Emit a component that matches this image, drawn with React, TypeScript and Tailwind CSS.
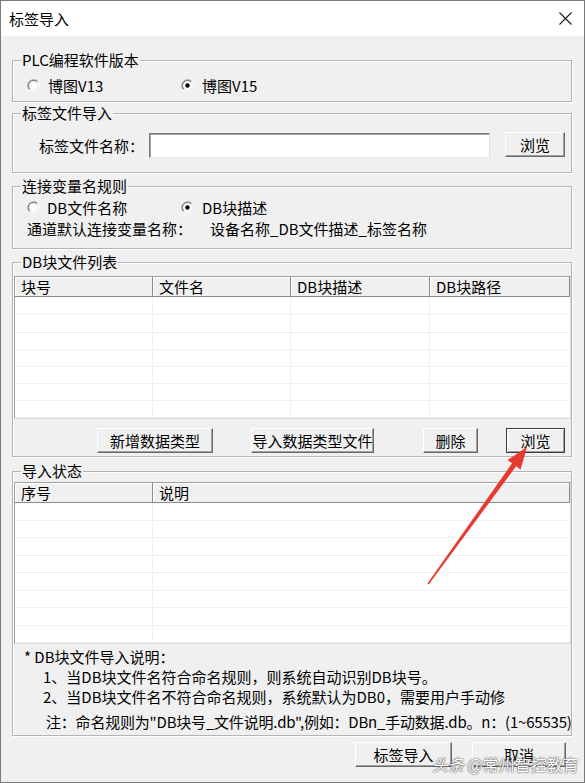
import React from "react";

function Radio({ checked }: { checked?: boolean }) {
  return (
    <svg width="13" height="13" viewBox="0 0 13 13" className="shrink-0">
      <circle cx="6.5" cy="6.5" r="6" fill="#ffffff" />
      <path d="M2.26 10.74A6 6 0 0 1 10.74 2.26" stroke="#a0a0a0" strokeWidth="1" fill="none" />
      <path d="M10.74 2.26A6 6 0 0 1 2.26 10.74" stroke="#ffffff" strokeWidth="1" fill="none" />
      <path d="M2.96 10.04A5 5 0 0 1 10.04 2.96" stroke="#696969" strokeWidth="1" fill="none" />
      <path d="M10.04 2.96A5 5 0 0 1 2.96 10.04" stroke="#e3e3e3" strokeWidth="1" fill="none" />
      {checked && <circle cx="6.5" cy="6.5" r="2.2" fill="#000000" />}
    </svg>
  );
}

function Group({
  title,
  className,
  children,
}: {
  title: string;
  className: string;
  children?: React.ReactNode;
}) {
  return (
    <div
      className={
        "relative w-[560px] border border-[#b4b4b4] shadow-[inset_1px_1px_0_#ffffff,1px_1px_0_#ffffff] " +
        className
      }
    >
      <span className="absolute -top-[10px] left-[8px] bg-[#f0f0f0] px-[1px] text-[15px] leading-[18px] whitespace-nowrap">
        {title}
      </span>
      {children}
    </div>
  );
}

function Btn({
  label,
  className,
  dark,
}: {
  label: string;
  className: string;
  dark?: boolean;
}) {
  return (
    <div
      className={
        "flex h-[25px] shrink-0 items-center justify-center bg-[#f0f0f0] text-[15px] leading-none " +
        (dark
          ? "border border-[#3c3c3c] shadow-[inset_1px_1px_0_#ffffff,inset_-1px_-1px_0_#a0a0a0] "
          : "border border-t-[#ffffff] border-l-[#ffffff] border-r-[#696969] border-b-[#696969] shadow-[inset_-1px_-1px_0_#a0a0a0] ") +
        className
      }
    >
      {label}
    </div>
  );
}

function ListView({
  cols,
  rows,
}: {
  cols: { label: string; w: number }[];
  rows: number[];
}) {
  return (
    <div className="ml-[1px] w-[557px] border border-t-[#a0a0a0] border-l-[#a0a0a0] border-r-[#dcdcdc] border-b-[#dcdcdc] bg-white">
      <div className="flex h-[20px]">
        {cols.map((c, i) => (
          <div
            key={i}
            style={{ width: c.w }}
            className="flex h-full shrink-0 items-center border-r border-b border-r-[#8a8a8a] border-b-[#8a8a8a] bg-[#f0f0f0] pl-[6px] text-[15px] leading-none shadow-[inset_1px_1px_0_#ffffff]"
          >
            {c.label}
          </div>
        ))}
      </div>
      {rows.map((h, r) => (
        <div key={r} style={{ height: h }} className="flex border-b border-[#f0f0f0]">
          {cols.map((c, i) => (
            <div
              key={i}
              style={{ width: c.w }}
              className={"h-full shrink-0 " + (i < cols.length - 1 ? "border-r border-[#f0f0f0]" : "")}
            />
          ))}
        </div>
      ))}
    </div>
  );
}

export default function App() {
  return (
    <div className="relative h-[783px] w-[585px] overflow-hidden border border-[#7a7a7a] bg-[#f0f0f0] font-['Noto_Sans_CJK_SC','Noto_Sans',sans-serif] text-black">
      {/* Title bar */}
      <div className="flex h-[35px] items-center justify-between bg-white pl-[8px] pr-[12px]">
        <span className="text-[15px] leading-none">标签导入</span>
        <svg width="13" height="13" viewBox="0 0 13 13">
          <path d="M0.5 0.5L12.5 12.5M12.5 0.5L0.5 12.5" stroke="#1a1a1a" strokeWidth="1.1" />
        </svg>
      </div>

      <div className="flex flex-col pl-[11px]">
        {/* Group 1 */}
        <Group title="PLC编程软件版本" className="mt-[24px] h-[42px]">
          <div className="flex h-[20px] items-center pl-[14px] mt-[14px] text-[15px] leading-none">
            <div className="flex w-[154px] items-center gap-[8px]">
              <Radio />
              <span>博图V13</span>
            </div>
            <div className="flex items-center gap-[8px]">
              <Radio checked />
              <span>博图V15</span>
            </div>
          </div>
        </Group>

        {/* Group 2 */}
        <Group title="标签文件导入" className="mt-[11px] h-[60px]">
          <div className="mt-[18px] flex items-start pl-[26px] text-[15px] leading-none">
            <div className="flex h-[26px] w-[110px] items-center">标签文件名称：</div>
            <div className="mt-[1px] h-[25px] w-[341px] border border-t-[#7a7a7a] border-l-[#7a7a7a] border-r-[#e3e3e3] border-b-[#e3e3e3] bg-white shadow-[inset_1px_1px_0_#a0a0a0]" />
            <Btn label="浏览" className="ml-[15px] w-[60px]" />
          </div>
        </Group>

        {/* Group 3 */}
        <Group title="连接变量名规则" className="mt-[13px] h-[63px]">
          <div className="mt-[10px] flex h-[20px] items-center pl-[14px] text-[15px] leading-none">
            <div className="flex w-[154px] items-center gap-[7px]">
              <Radio />
              <span>DB文件名称</span>
            </div>
            <div className="flex items-center gap-[8px]">
              <Radio checked />
              <span>DB块描述</span>
            </div>
          </div>
          <div className="flex h-[22px] items-center pl-[14px] text-[15px] leading-none">
            <span className="w-[183px]">通道默认连接变量名称：</span>
            <span>设备名称_DB文件描述_标签名称</span>
          </div>
        </Group>

        {/* Group 4 */}
        <Group title="DB块文件列表" className="mt-[13px] h-[195px]">
          <div className="pt-[13px]">
            <ListView
              cols={[
                { label: "块号", w: 138 },
                { label: "文件名", w: 138 },
                { label: "DB块描述", w: 139 },
                { label: "DB块路径", w: 140 },
              ]}
              rows={[18, 18, 17, 17, 17, 17, 17]}
            />
            <div className="mt-[9px] flex">
              <Btn label="新增数据类型" className="ml-[84px] w-[116px]" />
              <Btn label="导入数据类型文件" className="ml-[38px] w-[123px]" />
              <Btn label="删除" className="ml-[49px] w-[55px]" />
              <Btn label="浏览" className="ml-[28px] w-[59px]" dark />
            </div>
          </div>
        </Group>

        {/* Group 5 */}
        <Group title="导入状态" className="mt-[14px] h-[265px]">
          <div className="pt-[10px]">
            <ListView
              cols={[
                { label: "序号", w: 138 },
                { label: "说明", w: 417 },
              ]}
              rows={[18, 17, 18, 17, 18, 17, 18, 17]}
            />
            <div className="pt-[3px] text-[15px] leading-none">
              <div className="flex h-[19px] items-center pl-[11px]">* DB块文件导入说明：</div>
              <div className="flex h-[20px] items-center pl-[30px]">
                1、当DB块文件名符合命名规则，则系统自动识别DB块号。
              </div>
              <div className="flex h-[20px] items-center pl-[30px]">
                2、当DB块文件名不符合命名规则，系统默认为DB0，需要用户手动修
              </div>
              <div className="mt-[5px] flex h-[20px] items-center pl-[33px] whitespace-nowrap tracking-[-0.2px]">
                注：命名规则为"DB块号_文件说明.db",例如：DBn_手动数据.db。n：(1~65535)
              </div>
            </div>
          </div>
        </Group>

        {/* Bottom buttons */}
        <div className="mt-[6px] flex w-[560px] justify-end pr-[6px]">
          <Btn label="标签导入" className="w-[97px]" />
          <Btn label="取消" className="ml-[20px] w-[94px]" />
        </div>
      </div>

      {/* Red arrow annotation */}
      <svg className="pointer-events-none absolute left-[-1px] top-[-1px]" width="585" height="783" viewBox="0 0 585 783">
        <polygon
          points="427.4,583.5 512.1,463.3 507.6,460.1 527,447 520.6,469.5 516.1,466.3 428.7,584.5"
          fill="#e8392f"
        />
      </svg>

      {/* Watermark */}
      <div className="pointer-events-none absolute left-[431px] top-[752px] whitespace-nowrap text-[16px] leading-[22px] text-white [text-shadow:0_0_2px_#555,0_0_1px_#333]">
        <span className="italic">头条</span> @常州智控教育
      </div>
    </div>
  );
}
